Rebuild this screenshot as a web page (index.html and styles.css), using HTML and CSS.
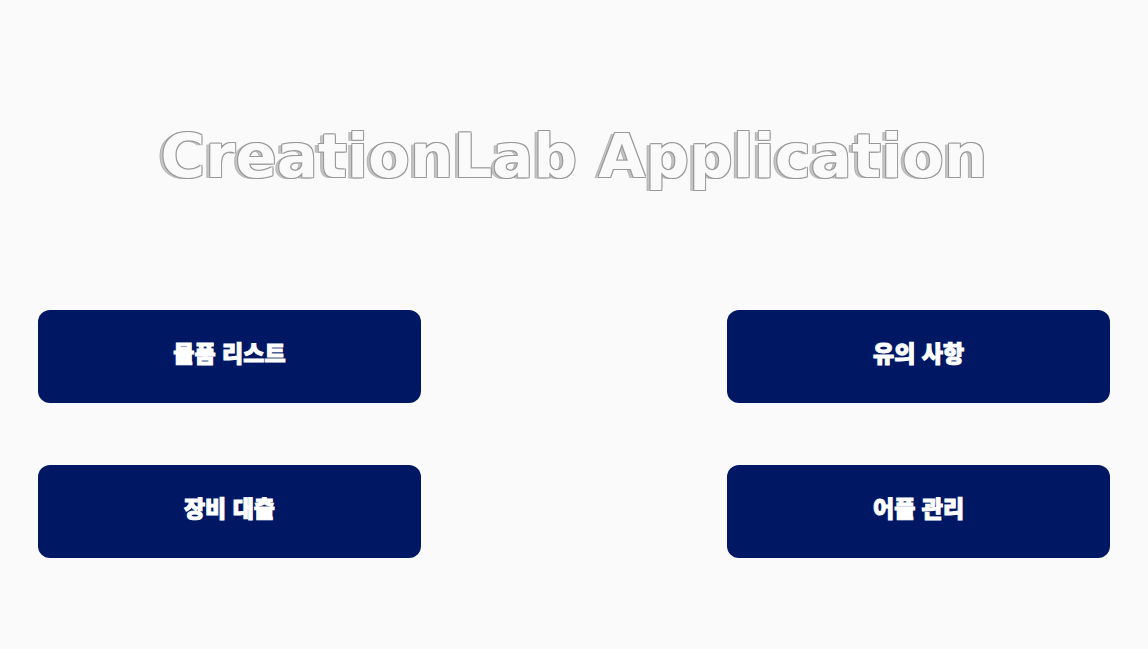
FILE: index.html
```html
<!DOCTYPE html>
<html lang="ko">
<head>
<meta charset="utf-8">
<meta name="viewport" content="width=device-width, initial-scale=1">
<title>CreationLab Application</title>
<link rel="stylesheet" href="styles.css">
</head>
<body>
<main class="home">
  <h1 class="title">CreationLab Application</h1>
  <nav class="menu">
    <button class="menu-button" type="button">물품 리스트</button>
    <button class="menu-button menu-button-end" type="button">유의 사항</button>
    <button class="menu-button" type="button">장비 대출</button>
    <button class="menu-button menu-button-end" type="button">어플 관리</button>
  </nav>
</main>
</body>
</html>
```

FILE: styles.css
```css
body {
  margin: 0;
  background: #fafafa;
}

.home {
  padding: 116px 38px 92px;
}

.title {
  margin: 0 0 114px;
  font-family: "DejaVu Sans", sans-serif;
  font-size: 61px;
  font-weight: 700;
  line-height: 80px;
  text-align: center;
  color: #fafafa;
  -webkit-text-stroke: 4px #fafafa;
  paint-order: stroke fill;
  text-shadow:
    1px 1px #999,
    1px -1px #999,
    -1px 1px #999,
    -1px -1px #999,
    -2px 1px #c4c4c4,
    -3px 1px #c4c4c4,
    -4px 1px #b4b4b4;
}

.menu {
  display: grid;
  grid-template-columns: 5fr 4fr 5fr;
  row-gap: 62px;
}

.menu-button {
  grid-column: 1;
  height: 93px;
  padding: 0 0 10px;
  border: 0;
  border-radius: 12px;
  background: #001864;
  color: #fff;
  font-family: "Noto Sans CJK KR", sans-serif;
  font-size: 23px;
  font-weight: 900;
  -webkit-text-stroke: 1px #fff;
  cursor: pointer;
}

.menu-button-end {
  grid-column: 3;
}
```
